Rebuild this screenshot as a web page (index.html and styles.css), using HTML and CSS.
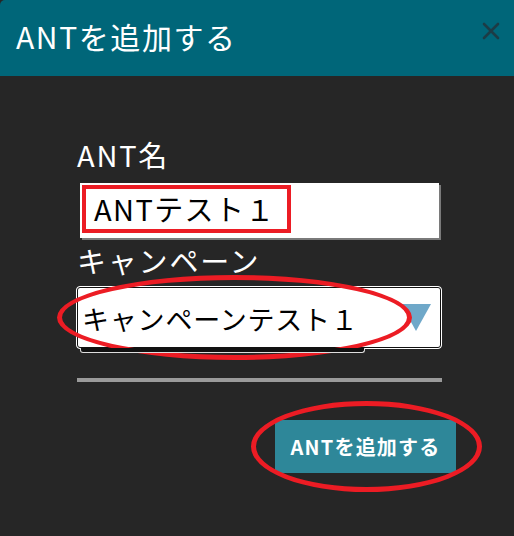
FILE: index.html
```html
<!DOCTYPE html>
<html lang="ja">
<head>
<meta charset="utf-8">
<title>ANTを追加する</title>
<link rel="stylesheet" href="styles.css">
</head>
<body>
<div class="modal">
  <header class="modal-header">
    <h1 class="modal-title">ANTを追加する</h1>
    <button class="close" aria-label="閉じる">
      <svg width="18" height="18" viewBox="0 0 18 18"><path d="M2 2L16 16M16 2L2 16" stroke="#1c3c46" stroke-width="2.6" stroke-linecap="round" fill="none"/></svg>
    </button>
  </header>
  <div class="modal-body">
    <div class="form">
      <label class="label">ANT名</label>
      <div class="input">
        <span class="mark-rect">ANTテスト１</span>
      </div>
      <label class="label label-campaign">キャンペーン</label>
      <div class="select">
        <span class="select-text">キャンペーンテスト１</span>
        <svg class="caret" width="30" height="27" viewBox="0 0 30 27"><path d="M0 0H30L15 27Z" fill="#6fa8c9"/></svg>
        <span class="mark-ellipse mark-select"></span>
      </div>
      <div class="divider"></div>
      <div class="actions">
        <button class="submit">ANTを追加する<span class="mark-ellipse mark-button"></span></button>
      </div>
    </div>
  </div>
</div>
</body>
</html>
```

FILE: styles.css
```css
* { box-sizing: border-box; }
html, body {
  margin: 0;
  padding: 0;
  background: #262626;
}
body {
  width: 514px;
  height: 536px;
  overflow: hidden;
  font-family: "Noto Sans CJK JP", "Noto Sans", sans-serif;
}
.modal {
  width: 514px;
  height: 536px;
  background: #262626;
  display: flex;
  flex-direction: column;
}
.modal-header {
  height: 76px;
  background: #006679;
  border-top-left-radius: 5px;
  display: flex;
  align-items: flex-start;
  justify-content: space-between;
  padding: 0 14px 0 16px;
}
.modal-title {
  margin: 0;
  margin-top: 16px;
  font-weight: 400;
  font-size: 30px;
  line-height: 40px;
  color: #ffffff;
  letter-spacing: 1.6px;
}
.close {
  margin-top: 22px;
  padding: 0;
  border: 0;
  background: transparent;
  width: 18px;
  height: 18px;
  display: block;
}
.close svg { display: block; }
.modal-body {
  flex: 1;
  padding: 60px 0 0 76px;
}
.form {
  width: 366px;
  display: flex;
  flex-direction: column;
}
.label {
  display: block;
  color: #ffffff;
  font-size: 29px;
  line-height: 36px;
  padding-left: 1px;
  letter-spacing: 1.8px;
}
.input {
  margin-top: 11px;
  margin-left: 4px;
  width: 359px;
  height: 55px;
  background: #ffffff;
  box-shadow: 2px 2px 0 #7a7a7a;
  padding: 2px;
}
.mark-rect {
  display: inline-block;
  width: 209px;
  height: 48px;
  border: 4px solid #ec1c24;
  padding-left: 8px;
  color: #000;
  font-size: 29px;
  line-height: 38px;
  letter-spacing: 1.4px;
  white-space: nowrap;
}
.label-campaign {
  margin-top: 4px;
}
.select {
  position: relative;
  margin-top: 8px;
  width: 366px;
  height: 63px;
  background: #fff;
  border: 1px solid #fff;
  outline: 1px solid #111;
  outline-offset: -2px;
  border-radius: 4px;
  display: flex;
  align-items: center;
  justify-content: space-between;
  padding: 0 10px 0 5px;
}
.select::after {
  content: "";
  position: absolute;
  left: 3px;
  width: 283px;
  top: 100%;
  height: 4px;
  border: 1px solid #ddd;
  border-top: 0;
  border-radius: 0 0 3px 3px;
  background: #111;
}
.select-text {
  color: #000;
  font-size: 27px;
  line-height: 36px;
  margin-top: 2px;
  letter-spacing: 0.8px;
  white-space: nowrap;
}
.caret { display: block; margin-top: -1px; }
.mark-ellipse {
  position: absolute;
  border: 5px solid #ec1c24;
  border-radius: 50%;
  pointer-events: none;
}
.mark-select {
  left: -20px;
  top: -12px;
  width: 355px;
  height: 85px;
}
.divider {
  margin-top: 29px;
  margin-left: 1px;
  width: 365px;
  height: 4px;
  background: #9a9a9a;
}
.actions {
  display: flex;
  justify-content: flex-end;
  margin-top: 38px;
  margin-right: -14px;
}
.submit {
  position: relative;
  width: 181px;
  height: 53px;
  border: 0;
  padding: 0;
  background: #2e8799;
  color: #fff;
  font-family: "Noto Sans CJK JP", "Noto Sans", sans-serif;
  font-weight: 700;
  font-size: 20px;
  line-height: 53px;
  letter-spacing: 1.2px;
}
.mark-button {
  left: -24px;
  top: -19px;
  width: 231px;
  height: 91px;
}
```
